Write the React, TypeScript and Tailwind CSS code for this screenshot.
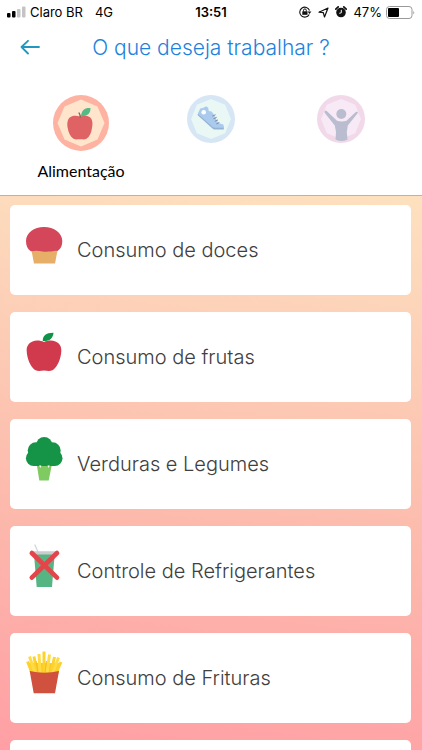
import type { ReactNode } from "react";

type Opcao = {
    titulo: string;
    icone: ReactNode;
};

const Bolinho = () => (
    <svg viewBox="0 0 40 46" className="h-[46px] w-10" aria-hidden="true">
        <path d="M7 27H34L31 42.5H10Z" fill="#e6ae67" />
        <path
            d="M20 6C30 6 38.3 12 38.3 20C38.3 25 36.5 28 33.5 30C30 29 28 31 24 30.5C20 31.5 18 29.5 14 30C11 29 9 31 6.5 30C3.5 28 2 24.5 2 20C2 12 10 6 20 6Z"
            fill="#d4475b"
        />
    </svg>
);

const Maca = () => (
    <svg viewBox="0 0 40 46" className="h-[46px] w-10" aria-hidden="true">
        <path
            d="M20 14C23.5 12.5 28 12 31.5 13.5C35.5 15 37.6 18.500 37.3 23C37 31 33.5 38.5 29 42C26 43.6 23.5 43 20 42.5C16.5 43 14 43.6 11 42C6.5 38.5 3 31 2.7 23C2.4 18.5 4.5 15 8.5 13.5C12 12 16.5 12.5 20 14Z"
            fill="#d13a4c"
        />
        <path d="M18.8 13C18.3 8 22 4.6 29.5 4.7C29 10.5 25 13.6 18.8 13Z" fill="#0f9447" />
    </svg>
);

const Brocolis = () => (
    <svg viewBox="0 0 40 46" className="h-[46px] w-10" aria-hidden="true">
        <path d="M12.7 29H28L24.7 45.4H15.3Z" fill="#80ca62" />
        <g fill="#159447">
            <circle cx="20.2" cy="10" r="8" />
            <circle cx="12" cy="15.5" r="8.3" />
            <circle cx="28.4" cy="15.5" r="8.3" />
            <circle cx="9.6" cy="23.3" r="7.7" />
            <circle cx="30.8" cy="23.3" r="7.7" />
            <rect x="9.5" y="14" width="21.5" height="17" />
        </g>
        <path d="M15 30.5L16.5 33L17.3 30.5ZM23.5 30.5L24.5 33L25.8 30.5Z" fill="#fff" />
    </svg>
);

const Refrigerante = () => (
    <svg viewBox="0 0 40 46" className="h-[46px] w-10" aria-hidden="true">
        <path d="M10.7 2.5L14 10" stroke="#d3d6d8" strokeWidth="1.3" />
        <path d="M10 12H30.7L28 45H12.7Z" fill="#55b583" />
        <rect x="8.7" y="9.3" width="23.5" height="3.3" rx="1" fill="#c9cdd0" />
        <path d="M7.8 11L33 35.7M33 11L7.8 35.7" stroke="#e5444a" strokeWidth="4.6" strokeLinecap="round" />
    </svg>
);

const Batata = () => (
    <svg viewBox="0 0 40 46" className="h-[46px] w-10" aria-hidden="true">
        <path d="M4 14L36 14L34.5 25H6.5Z" fill="#fbc920" />
        <g strokeWidth="3">
            <path d="M3.6 12.5L8 24M10 7.5L13 24M20 2.5V24M30.5 8L27 24M37 13L32 24" stroke="#fdd22c" />
            <path d="M5.5 7.5L11 24M15 5L16 24M25.5 5.5L23 24M34.5 8.5L29 24" stroke="#ffdc45" />
            <path d="M12 12L14 24M22.5 12L21 24" stroke="#f5bd1c" strokeWidth="1" />
        </g>
        <path d="M5.7 22Q20.5 25.5 35 22L31 44.2H9.7Z" fill="#cf513e" />
    </svg>
);

const opcoes: Opcao[] = [
    { titulo: "Consumo de doces", icone: <Bolinho /> },
    { titulo: "Consumo de frutas", icone: <Maca /> },
    { titulo: "Verduras e Legumes", icone: <Brocolis /> },
    { titulo: "Controle de Refrigerantes", icone: <Refrigerante /> },
    { titulo: "Consumo de Frituras", icone: <Batata /> },
];

const AbaAlimentacao = () => (
    <svg viewBox="0 0 56 56" className="size-14" aria-hidden="true">
        <circle cx="28" cy="28" r="28" fill="#feb3a2" />
        <path d="M28 4.5L44.5 11.5L51.5 28L44.5 44.5L28 51.5L11.5 44.5L4.5 28L11.5 11.5Z" fill="#fee5cc" />
        <path
            d="M27 21.5C30 20.5 34 20.3 36.5 22C39.5 24 40 28 39 33C38.3 38 36.5 42 33.5 43.7C31 45 29 44 27 44.3C25 44 23 45 20.5 43.7C17.5 42 15.5 38 14.7 33C13.8 28 14.5 24 17.5 22C20 20.3 24 20.5 27 21.5Z"
            fill="#df6265"
        />
        <path d="M27.3 22.5Q27.5 20 25.8 17.5" stroke="#6c6658" strokeWidth="1.3" fill="none" />
        <path d="M28 21C28.5 15 32 12.5 37.5 13C37.5 18.5 34.5 21.5 28 21Z" fill="#55ba85" />
    </svg>
);

const AbaExercicio = () => (
    <svg viewBox="0 0 48 48" className="size-12" aria-hidden="true">
        <circle cx="24" cy="24" r="24" fill="#d6e6f4" />
        <path d="M24 4L38.2 9.8L44 24L38.2 38.2L24 44L9.8 38.2L4 24L9.8 9.8Z" fill="#e9f7f5" />
        <path d="M10.5 19.5L13 16L28.5 31.5H36.8V34.6H27.5Q26.5 34.6 25.5 33.6L11 20.5Z" fill="#96b2d3" />
        <path
            d="M10.8 18.8L13.2 13.5Q17 12.8 18.6 11.5Q20.5 11.2 21.2 13L21.8 16L24.5 16.5Q26.5 18 27.5 21L31 27.5Q33.500 29.3 36 29.3Q36.8 30 36.8 32.8H28Q26.8 32.8 25.5 31.7Z"
            fill="#abcbee"
        />
        <circle cx="16.7" cy="17.3" r="2.3" fill="#fff" />
        <path
            d="M25.7 21L28.2 19.9M26.8 23.6L29.3 22.5M28.2 26.2L30.6 25.1M29.7 28.7L32 27.7"
            stroke="#7b8ba3"
            strokeLinecap="round"
        />
    </svg>
);

const AbaBemEstar = () => (
    <svg viewBox="0 0 48 48" className="size-12" aria-hidden="true">
        <circle cx="24" cy="24" r="24" fill="#f1d9e9" />
        <path d="M24 4L38.2 9.8L44 24L38.2 38.2L24 44L9.8 38.2L4 24L9.8 9.8Z" fill="#f7eaf6" />
        <circle cx="24.3" cy="19" r="5" fill="#babdd0" />
        <path
            d="M7.6 16.2Q8.6 15 10 16.2L20 25.8Q24.5 27 29.500 25.8L38.8 17Q40.4 16 41 17.8L30.800 30.500L29.8 37L30.500 44.500Q24.3 47.5 18.5 44.5L19 37L17.8 30.5L8 18.2Q7.2 17 7.6 16.2Z"
            fill="#babdd0"
        />
    </svg>
);

const BarraStatus = () => (
    <div className="flex h-6 items-center px-[7px] font-[Inter,sans-serif] text-[13px] leading-6 text-black">
        <div className="flex flex-1 items-center">
            <svg viewBox="0 0 19 12" className="mr-1 h-3 w-[19px]" aria-hidden="true">
                <rect x="0" y="7" width="3.5" height="4.5" rx="1" fill="#000" />
                <rect x="5" y="5" width="3.5" height="6.5" rx="1" fill="#000" />
                <rect x="10" y="3" width="3.5" height="8.5" rx="1" fill="#c4c4c4" />
                <rect x="15" y="0.5" width="3.5" height="11" rx="1" fill="#c4c4c4" />
            </svg>
            <span>Claro BR</span>
            <span className="ml-3">4G</span>
        </div>
        <span className="font-semibold">13:51</span>
        <div className="flex flex-1 items-center justify-end">
            <svg viewBox="0 0 14 12" className="mr-[6px] h-3 w-[14px]" aria-hidden="true">
                <path d="M11.2 8.5A5 5 0 1 1 11.5 4.5" fill="none" stroke="#111" strokeWidth="1.1" />
                <path d="M9.6 5.5H13.4L11.5 8Z" fill="#111" />
                <rect x="4.3" y="5.3" width="5.2" height="3.5" fill="#111" />
                <path d="M5.5 5.5V4.3A1.4 1.4 0 0 1 8.3 4.3V5.5" fill="none" stroke="#111" />
            </svg>
            <svg viewBox="0 0 11 11" className="mr-[6px] size-[11px]" aria-hidden="true">
                <path d="M10 1L6.5 10L5.3 5.7L1 5.2Z" fill="none" stroke="#111" strokeWidth="1.2" strokeLinejoin="round" />
            </svg>
            <svg viewBox="0 0 12 12" className="mr-[6px] size-3" aria-hidden="true">
                <circle cx="6" cy="6.5" r="4.8" fill="#111" />
                <path d="M0.8 3.2L3.2 0.9M11.2 3.2L8.8 0.9" stroke="#111" strokeWidth="1.7" strokeLinecap="round" />
                <path d="M6.3 3.8V6.8L4.3 7.3" fill="none" stroke="#fff" />
            </svg>
            <span className="mr-1">47%</span>
            <svg viewBox="0 0 29 13" className="h-[13px] w-[29px]" aria-hidden="true">
                <rect x="0.5" y="0.5" width="25.5" height="12" rx="3" fill="#fff" stroke="#999" />
                <rect x="2" y="2" width="11" height="9" rx="1" fill="#000" />
                <path d="M27.3 4.5Q29 6.5 27.3 8.5Z" fill="#999" />
            </svg>
        </div>
    </div>
);

export default function App() {
    return (
        <div className="flex h-screen flex-col overflow-hidden bg-white">
            <header className="border-b border-[#b4b4b4] bg-white">
                <BarraStatus />

                <div className="grid h-12 grid-cols-[1fr_auto_1fr] items-center px-5">
                    <button type="button" aria-label="Voltar" className="w-5">
                        <svg viewBox="0 0 20 16" className="h-4 w-5" aria-hidden="true">
                            <path
                                d="M19 7H1.5M8 0.8L1.5 7L8 13.5"
                                fill="none"
                                stroke="#2196be"
                                strokeWidth="1.8"
                                strokeLinecap="round"
                                strokeLinejoin="round"
                            />
                        </svg>
                    </button>
                    <h1 className="font-[Inter,sans-serif] text-[21px] font-light text-[#1e82dc]">
                        O que deseja trabalhar ?
                    </h1>
                </div>

                <nav className="grid h-[123px] grid-cols-3 items-start px-4 pt-[23px]">
                    <button type="button" className="flex flex-col items-center gap-2">
                        <AbaAlimentacao />
                        <span className="font-[Lato,sans-serif] text-base text-black">
                            Alimentação
                        </span>
                    </button>
                    <button type="button" aria-label="Exercício" className="flex justify-center">
                        <AbaExercicio />
                    </button>
                    <button type="button" aria-label="Bem-estar" className="flex justify-center">
                        <AbaBemEstar />
                    </button>
                </nav>
            </header>

            <main className="flex-1 overflow-y-auto bg-linear-[187deg,#fde1bf,#fcb9ac_60%,#ff9fa5] pt-[9px] pr-[11px] pl-[10px] [scrollbar-width:none]">
                <ul className="flex flex-col gap-[17px]">
                    {opcoes.map((opcao) => (
                        <li key={opcao.titulo}>
                            <button
                                type="button"
                                className="flex h-[90px] w-full items-center rounded-[5px] bg-white pl-[14px] text-left"
                            >
                                <span className="mr-[13px] mb-3">{opcao.icone}</span>
                                <span className="font-[Inter,sans-serif] text-[20px] font-light text-[#404040]">
                                    {opcao.titulo}
                                </span>
                            </button>
                        </li>
                    ))}
                    <li className="h-[90px] rounded-[5px] bg-white" />
                </ul>
            </main>
        </div>
    );
}
